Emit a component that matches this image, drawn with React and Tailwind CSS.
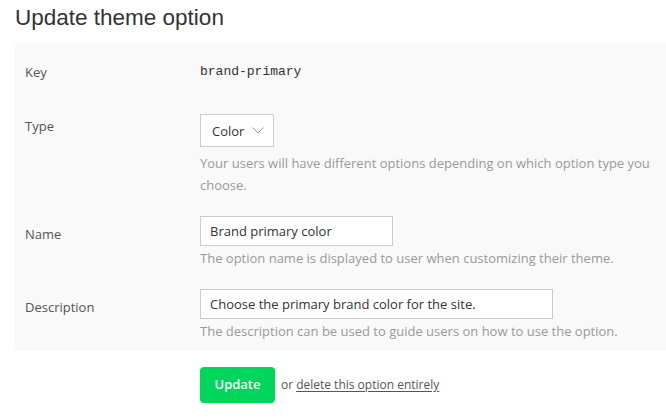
function Row({ label, labelPad = 'pt-0', className = '', children }) {
    return (
        <div className={`flex ${className}`}>
            <div className={`w-[185px] shrink-0 pl-[10px] text-[13px] leading-[22px] text-[#555] ${labelPad}`}>
                {label}
            </div>
            <div className="flex-1 text-[13px] leading-[22px]">{children}</div>
        </div>
    );
}

function Help({ children, className = '' }) {
    return (
        <p className={`text-[13px] leading-[22px] text-[#999] ${className}`}>{children}</p>
    );
}

export default function App() {
    return (
        <div className="w-[666px] h-[419px] bg-white font-['Open_Sans',sans-serif]">
            <h1 className="pt-[3px] pl-[15px] font-['Liberation_Sans',Arial,sans-serif] text-[22.5px] leading-[30px] text-[#333]">
                Update theme option
            </h1>

            {/* Form panel */}
            <div className="mt-[10px] ml-[15px] bg-[#f9f9f9] pt-[18px] pb-[9px]">
                <Row label="Key">
                    <span className="block font-['Liberation_Mono',monospace] text-[13px] leading-[22px] text-[#333]">
                        brand-primary
                    </span>
                </Row>

                <Row label="Type" labelPad="pt-[1px]" className="mt-[31px]">
                    <div className="flex h-[33px] w-[74px] items-center gap-[8px] border border-[#ccc] bg-white pl-[11px] text-[13px] text-[#333]">
                        <span>Color</span>
                        <svg width="12" height="7" viewBox="0 0 12 7" fill="none" stroke="#999" strokeWidth="1">
                            <polyline points="0.5,0.5 6,6 11.5,0.5" />
                        </svg>
                    </div>
                    <Help className="mt-[5px]">
                        Your users will have different options depending on which option type you choose.
                    </Help>
                </Row>

                <Row label="Name" labelPad="pt-[7px]" className="mt-[20px]">
                    <input
                        readOnly
                        value="Brand primary color"
                        className="block h-[30px] w-[193px] border border-[#ccc] bg-white px-[9px] text-[13px] text-[#333] outline-none"
                    />
                    <Help className="mt-[1px]">
                        The option name is displayed to user when customizing their theme.
                    </Help>
                </Row>

                <Row label="Description" labelPad="pt-[7px]" className="mt-[20px]">
                    <input
                        readOnly
                        value="Choose the primary brand color for the site."
                        className="block h-[30px] w-[353px] border border-[#ccc] bg-white px-[9px] text-[13px] text-[#333] outline-none"
                    />
                    <Help className="mt-[1px]">
                        The description can be used to guide users on how to use the option.
                    </Help>
                </Row>
            </div>

            {/* Actions */}
            <div className="mt-[16px] flex items-center pl-[200px] text-[12px] text-[#555]">
                <button className="h-[36px] w-[75px] rounded-[4px] bg-[#00d65b] text-[13px] font-semibold text-white">
                    Update
                </button>
                <span className="ml-[6px]">or</span>
                <a href="#" className="ml-[3px] text-[#555] underline underline-offset-2">
                    delete this option entirely
                </a>
            </div>
        </div>
    );
}
